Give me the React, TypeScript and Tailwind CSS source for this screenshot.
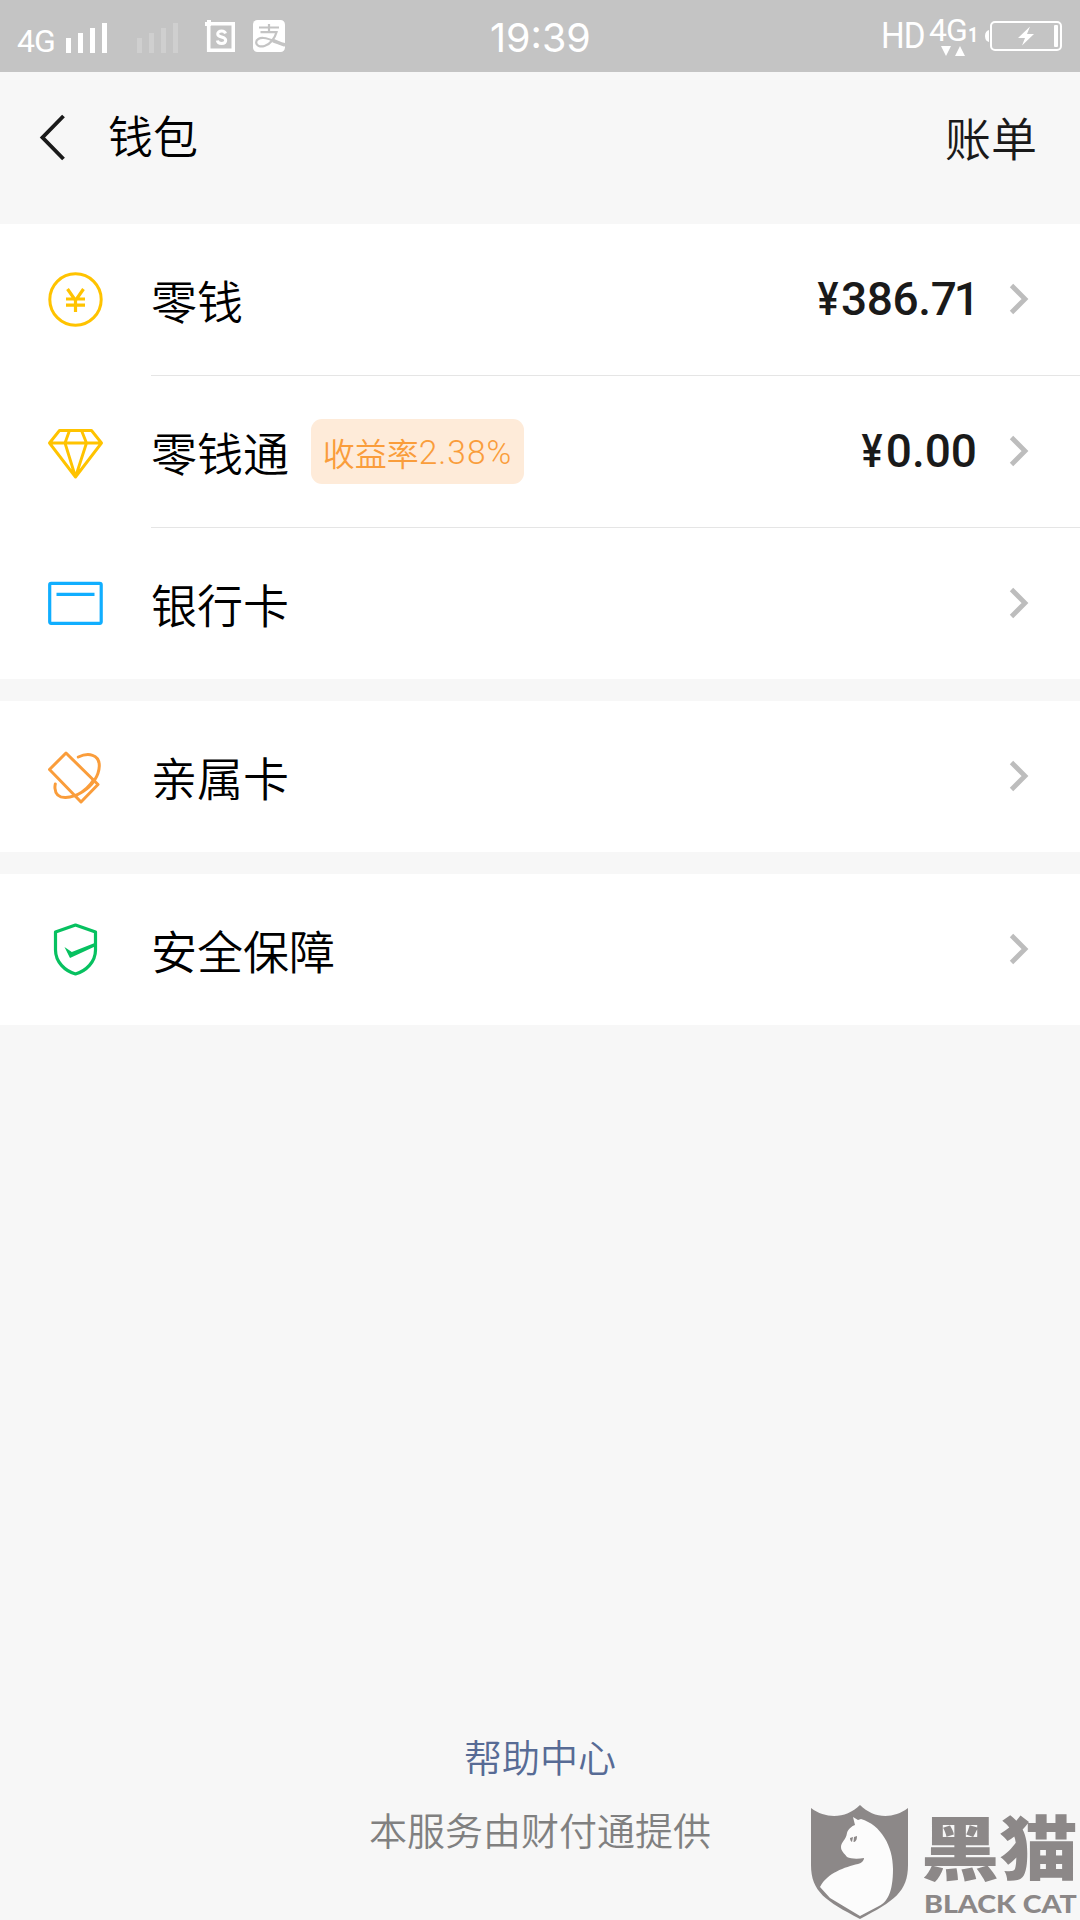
import React from "react";

const cjk = "font-['Noto_Sans_CJK_SC',sans-serif] font-[350]";

function SignalBars({ faded = false }: { faded?: boolean }) {
  return (
    <svg width="42" height="30" viewBox="0 0 42 30" fill="#fff" opacity={faded ? 0.2 : 1}>
      <rect x="0" y="15" width="5" height="15" />
      <rect x="12" y="10" width="5" height="20" />
      <rect x="24" y="5" width="5" height="25" />
      <rect x="36" y="0" width="5" height="30" />
    </svg>
  );
}

function StatusBar() {
  return (
    <div className="relative flex h-[72px] bg-[#c4c4c4] font-normal text-white">
      <div className="ml-[17px] mt-[24px] w-[49px] whitespace-nowrap font-['Roboto'] text-[32px] leading-[34px] tracking-[-1px]">4G</div>
      <div className="mt-[23px]"><SignalBars /></div>
      <div className="ml-[29px] mt-[23px]"><SignalBars faded /></div>
      <svg className="ml-[26px] mt-[20px]" width="30" height="32" viewBox="0 0 30 32">
        <path d="M3.700 3.700H28.300V30.300H3.700Z" fill="none" stroke="#fff" strokeWidth="3.600" />
        <path d="M0 2H2V0H6V6H0Z" fill="#fff" />
        <path d="M20.500 13.500C20 11.800 18.300 11 16.500 11C14.200 11 12.700 12.200 12.700 14C12.700 18 20.700 16 20.700 20.300C20.700 22.500 18.800 23.500 16.600 23.500C14.300 23.500 12.700 22.500 12.300 20.500" fill="none" stroke="#fff" strokeWidth="3" />
      </svg>
      <svg className="ml-[18px] mt-[20px]" width="32" height="32" viewBox="0 0 32 32" fill="none" stroke="#c4c4c4">
        <rect width="32" height="32" rx="4.500" fill="#fff" stroke="none" />
        <path d="M16 4V12M6 7.500H26M7.500 12.200H23.500C22 18 17 24.500 11.500 26C7 27.300 3.300 25.600 3.200 22.500C3.100 19.500 6.500 17.700 10.500 18C17 18.500 24 22.500 32 25" strokeWidth="2.200" />
        <path d="M20 20.500C24 22 28 23.800 32 25" strokeWidth="3.600" />
      </svg>
      <div className="absolute left-[490px] top-[14px] whitespace-nowrap font-['Inter'] text-[39.5px] leading-[48px]">19:39</div>
      <div className="absolute left-[881px] top-[14px] origin-left scale-x-[0.91] whitespace-nowrap font-['Roboto'] text-[36.5px] leading-[44px] tracking-[-1px]">HD</div>
      <div className="absolute left-[929px] top-[11px] whitespace-nowrap font-['Roboto'] text-[32px] leading-[38px] tracking-[-1px]">4G</div>
      <div className="absolute left-[968px] top-[24px] origin-left scale-x-[0.85] whitespace-nowrap font-['Roboto'] text-[21px] font-bold leading-[22px]">1</div>
      <svg className="absolute left-[940px] top-[45px]" width="26" height="12" viewBox="0 0 26 12" fill="#fff">
        <path d="M1 1H11L6 11ZM15 11H25L20 1Z" />
      </svg>
      <svg className="absolute left-[984px] top-[20px]" width="80" height="32" viewBox="0 0 80 32">
        <path d="M5 10V22C2.500 21.500 1 19.500 1 16S2.500 10.500 5 10Z" fill="#fff" />
        <rect x="7" y="2" width="70" height="28" rx="4" fill="none" stroke="#fff" strokeWidth="2" />
        <rect x="70" y="5" width="4" height="22" rx="1" fill="#fff" />
        <path d="M46 6.500L34 18H41L38 25.500L50 14H43Z" fill="#fff" />
      </svg>
    </div>
  );
}

function Chevron() {
  return (
    <svg className="mb-[2px] ml-[32px] mr-[51px] shrink-0" width="20" height="32" viewBox="0 0 20 32">
      <path d="M2.500 2.500L16 16L2.500 29.500" fill="none" stroke="#bdbdbd" strokeWidth="4.800" />
    </svg>
  );
}

function CoinIcon() {
  return (
    <svg width="56" height="56" viewBox="0 0 56 56" fill="none" stroke="#ffc300">
      <circle cx="27.500" cy="27.500" r="25.700" strokeWidth="3" />
      <path d="M19.500 17L27.500 28.500L35.500 17M18 27H37M18 33.200H37M27.500 28V40" strokeWidth="3.200" />
    </svg>
  );
}

function DiamondIcon() {
  return (
    <svg width="56" height="56" viewBox="0 0 56 56" fill="none" stroke="#ffc300" strokeWidth="2.900" strokeLinejoin="round">
      <path d="M11.500 6.500H43.500L53.500 19L27.500 53L1.500 19ZM1.500 19H53.500M21.500 6.500L17 19L27.500 53L38.500 19L33.500 6.500" />
    </svg>
  );
}

function CardIcon() {
  return (
    <svg width="56" height="56" viewBox="0 0 56 56" fill="none" stroke="#10aeff" strokeWidth="3.200">
      <rect x="1.700" y="7.300" width="51.500" height="40" rx="1.500" />
      <path d="M8.500 18.300H46.500" />
    </svg>
  );
}

function FamilyIcon() {
  return (
    <svg width="56" height="56" viewBox="0 0 56 56" fill="none" stroke="#fa9d3b" strokeWidth="3" strokeLinejoin="round" strokeLinecap="round">
      <path d="M18 4L50 35.500L33 53L1.500 20.500Z" />
      <path d="M30.300 8C40 3.500 51.500 5 51.300 17C51 27 44 37 35 42.500C25 49 8 53 7 39.500C6.800 38 7 36.500 7.300 35M29 46C35.500 42.500 41.500 37.500 45.500 31" />
    </svg>
  );
}

function ShieldIcon() {
  return (
    <svg width="56" height="56" viewBox="0 0 56 56" fill="none" stroke="#07c160" strokeWidth="3.200">
      <path d="M27.500 3L47.500 10V28C47.500 40 38 49 27.500 52C17 49 7.500 40 7.500 28V10Z" strokeLinejoin="round" />
      <path d="M16.500 25L23.800 30L48 20.500V24L22 36Z" fill="#07c160" stroke="none" />
    </svg>
  );
}

type RowProps = {
  icon: React.ReactNode;
  label: string;
  badge?: React.ReactNode;
  amount?: React.ReactNode;
  divider?: boolean;
};

function Row({ icon, label, badge, amount, divider }: RowProps) {
  return (
    <div className={`flex bg-white ${divider ? "h-[152px]" : "h-[151px]"}`}>
      <div className="flex w-[151px] shrink-0 items-center pl-[48px]">{icon}</div>
      <div className={`flex flex-1 items-center ${divider ? "border-b border-[#e5e5e5]" : ""}`}>
        <span className="whitespace-nowrap pb-[2px] text-[46px] leading-[60px] text-black">{label}</span>
        {badge && (
          <span className="ml-[22px] flex h-[65px] w-[213px] items-center justify-center whitespace-nowrap rounded-[11px] bg-[#feebd9] text-[32px] text-[#fa9d3b]">
            {badge}
          </span>
        )}
        {amount && (
          <span className="ml-auto flex whitespace-nowrap pb-[2px] font-['Roboto'] text-[46px] font-medium leading-[60px] text-[#1a1a1a]">
            <span className="mr-[3px] origin-right scale-x-[0.86]">¥</span>
            {amount}
          </span>
        )}
        <span className={amount ? "" : "ml-auto"}><Chevron /></span>
      </div>
    </div>
  );
}

function BlackCatMark() {
  return (
    <div className="absolute bottom-0 right-0 flex h-[116px] w-[270px] text-[#8c8888]">
      <svg className="shrink-0" width="98" height="116" viewBox="0 0 98 116">
        <path d="M1 4C17 16 37 14 50 1C63 14 82 16 98 4V61C98 88 84 97 50 115C16 97 1 88 1 61Z" fill="#8c8888" />
        <path d="M10 83C17 69 35 63 48 60C52 59 54 56 54 54C48 55 41 55 37 53C34 49 31 47 31 43C31 38 36 36 37 29C38 25 42 22 45 21L43 13L48 16L51 15C71 21 83 42 83 65C83 89 77 98 69 102L50 112L20 94Z" fill="#fcfcfc" />
        <path d="M40 34L43 33L42 38C40.500 37 40 35.500 40 34ZM44 33L47 32C47 35.500 46 38 43.500 38Z" fill="#8c8888" />
      </svg>
      <div className="relative flex-1">
        <div className="absolute left-[13px] top-[3px] origin-left scale-x-[1.12] whitespace-nowrap text-[70px] font-black leading-[76px]">黑猫</div>
        <div className="absolute left-[16px] top-[88px] origin-left scale-x-[1.19] whitespace-nowrap font-['Lato'] text-[24px] font-black leading-[24px]">BLACK CAT</div>
      </div>
    </div>
  );
}

export default function App() {
  return (
    <div className={`relative flex h-[1920px] w-[1080px] flex-col overflow-hidden bg-[#f7f7f7] ${cjk}`}>
      <StatusBar />
      <header className="flex h-[152px] items-start pl-[39px] pr-[43px]">
        <svg className="mt-[42px]" width="27" height="48" viewBox="0 0 27 48">
          <path d="M24.500 2L3.500 23.500L24.500 45" fill="none" stroke="#1a1a1a" strokeWidth="3.900" />
        </svg>
        <h1 className="ml-[42px] mt-[33px] text-[45px] font-[350] leading-[60px] text-black">钱包</h1>
        <span className="ml-auto mt-[34px] text-[46px] leading-[60px] text-[#1a1a1a]">账单</span>
      </header>
      <main>
        <Row
          icon={<CoinIcon />}
          label="零钱"
          amount={<span className="tracking-[-0.4px]">386.<span className="tracking-[-3px]">71</span></span>}
          divider
        />
        <Row
          icon={<DiamondIcon />}
          label="零钱通"
          badge={<>收益率<span className="pt-[3px] font-['Roboto'] text-[33.5px] font-light tracking-[1px]">2.38%</span></>}
          amount={<span>0.00</span>}
          divider
        />
        <Row icon={<CardIcon />} label="银行卡" />
        <div className="mt-[22px]"><Row icon={<FamilyIcon />} label="亲属卡" /></div>
        <div className="mt-[22px]"><Row icon={<ShieldIcon />} label="安全保障" /></div>
      </main>
      <footer className="mt-auto flex h-[192px] flex-col items-center">
        <a className="text-[38px] leading-[56px] text-[#576b95]">帮助中心</a>
        <p className="mt-[17px] text-[38px] leading-[56px] text-[#808080]">本服务由财付通提供</p>
      </footer>
      <BlackCatMark />
    </div>
  );
}
